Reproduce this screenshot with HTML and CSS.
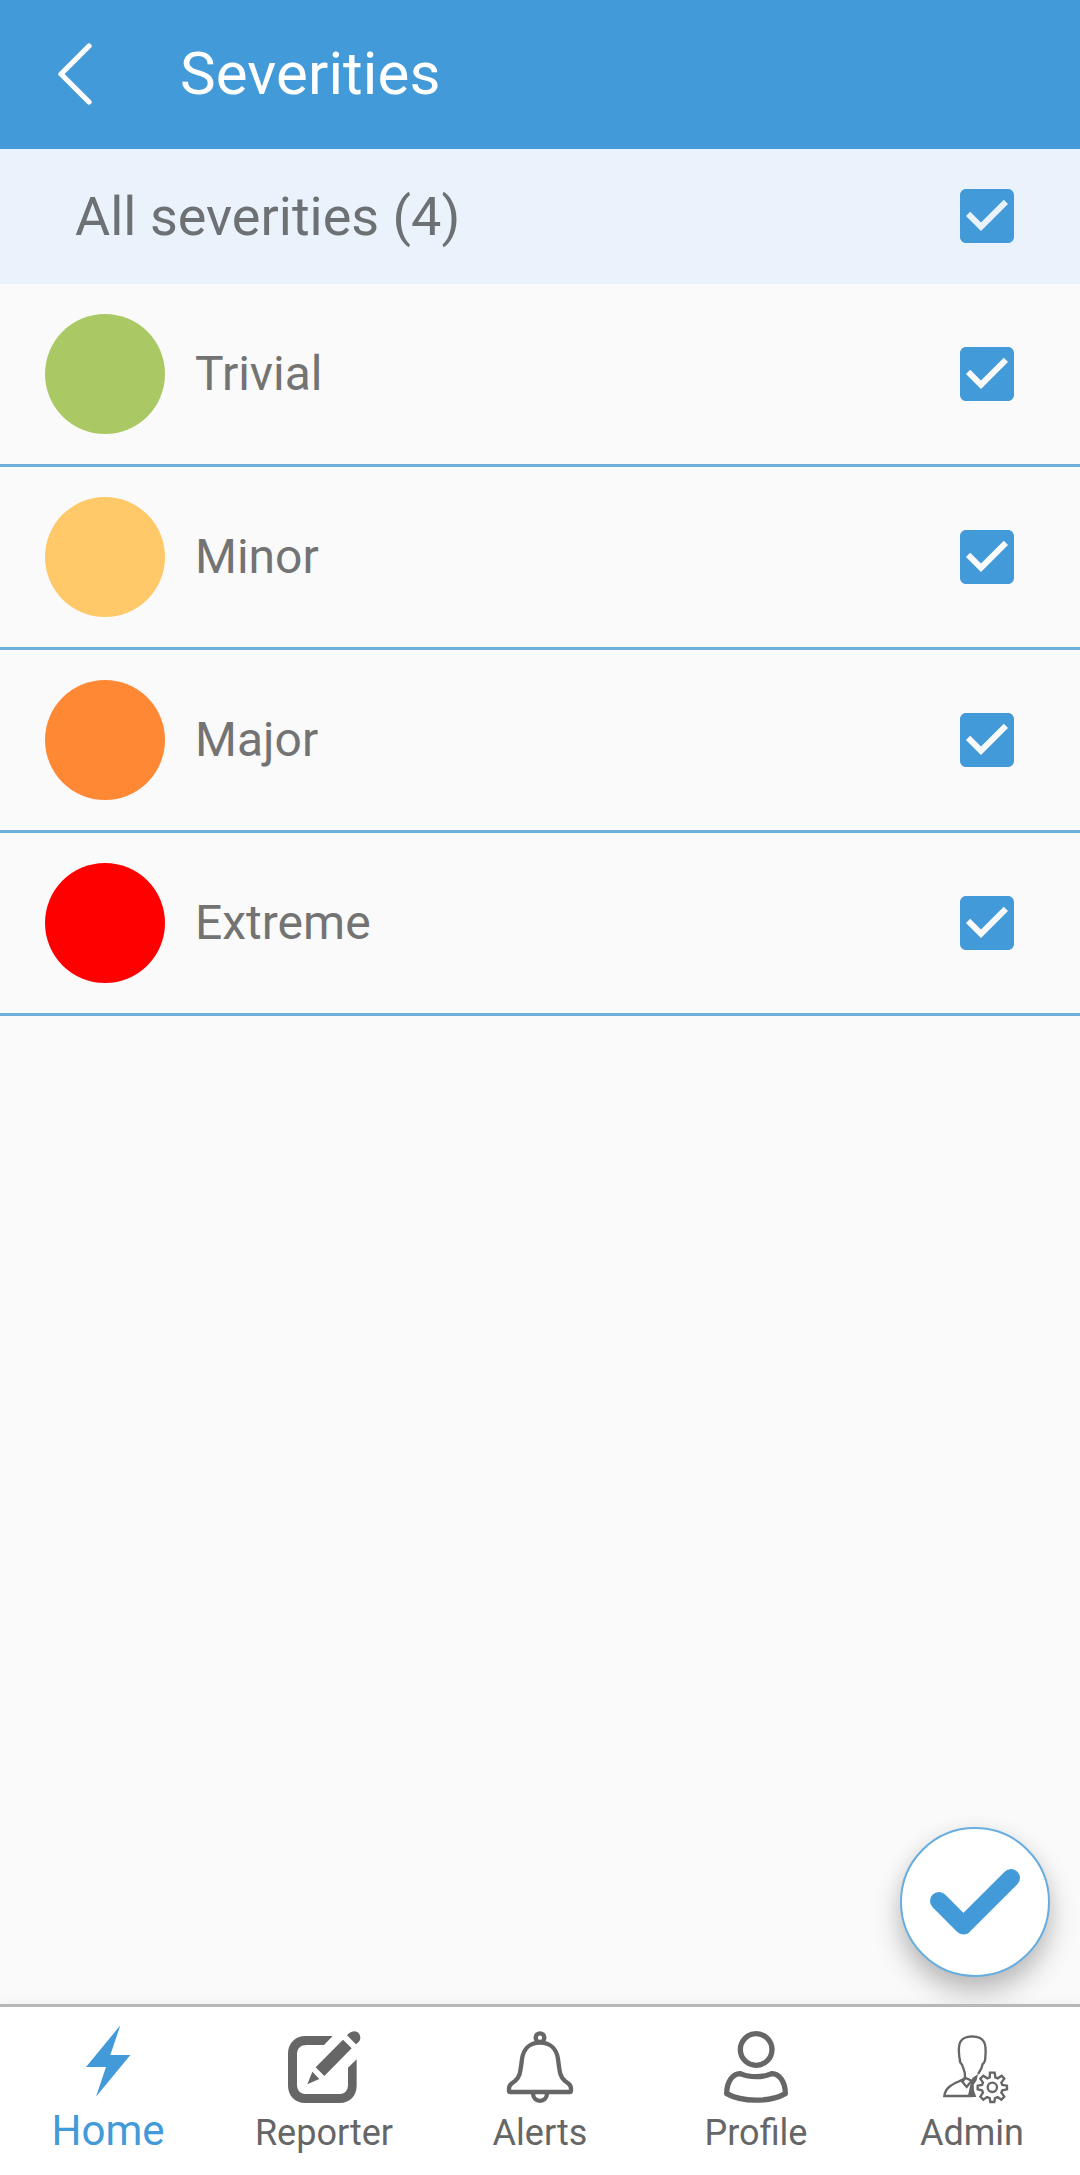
FILE: index.html
```html
<!DOCTYPE html>
<html lang="en">
<head>
<meta charset="utf-8">
<title>Severities</title>
<link rel="stylesheet" href="styles.css">
</head>
<body>
<svg class="defs" width="0" height="0" aria-hidden="true">
  <symbol id="checkbox" viewBox="0 0 24 24">
    <path d="M19 3H5c-1.1 0-2 .9-2 2v14c0 1.1.9 2 2 2h14c1.1 0 2-.9 2-2V5c0-1.1-.9-2-2-2zm-9 14l-5-5 1.41-1.41L10 14.17l7.59-7.59L19 8l-9 9z"/>
  </symbol>
</svg>
<div class="app">
  <header class="header">
    <svg class="back" viewBox="0 0 36 66"><path d="M32 5 4 33 32 61"/></svg>
    <h1 class="title">Severities</h1>
  </header>
  <main class="content">
    <div class="all-row">
      <span class="all-label">All severities (4)</span>
      <svg class="checkbox"><use href="#checkbox"/></svg>
    </div>
    <ul class="list">
      <li class="row"><span class="dot trivial"></span><span class="label">Trivial</span><svg class="checkbox"><use href="#checkbox"/></svg></li>
      <li class="row"><span class="dot minor"></span><span class="label">Minor</span><svg class="checkbox"><use href="#checkbox"/></svg></li>
      <li class="row"><span class="dot major"></span><span class="label">Major</span><svg class="checkbox"><use href="#checkbox"/></svg></li>
      <li class="row"><span class="dot extreme"></span><span class="label">Extreme</span><svg class="checkbox"><use href="#checkbox"/></svg></li>
    </ul>
    <button class="fab" aria-label="Confirm">
      <svg class="fab-icon" viewBox="0 0 150 150"><path d="M39 74 63.4 98.5 111 51"/></svg>
    </button>
  </main>
  <nav class="nav">
    <a class="tab active">
      <svg class="tab-icon" viewBox="108 96 252 252"><path class="fill" d="M271 106 241 195H301L198 320 228 231H168Z"/></svg>
      <span>Home</span>
    </a>
    <a class="tab">
      <svg class="tab-icon" viewBox="126 96 252 252">
        <path class="fill" d="M278 138H196C166 138 144 160 144 190V287C144 317 166 339 196 339H299C329 339 350 317 350 287V208L324 233V284C324 302 314 312 296 312H200C182 312 171 302 171 284V193C171 175 182 165 200 165H252Z"/>
        <path class="fill" d="M309 149 335 175 253 258 227 232ZM217 245 238 267 202 283ZM321 136C337 116 361 122 361 144C361 153 354 158 348 163Z"/>
      </svg>
      <span>Reporter</span>
    </a>
    <a class="tab">
      <svg class="tab-icon" viewBox="84 96 252 252">
        <g class="line bell">
          <circle cx="210" cy="143" r="13"/>
          <path d="M210 158C178 158 160 178 156 207C151 244 151 260 135 273C122 282 117 286 117 297V302Q117 306 122 306H298Q303 306 303 302V297C303 286 298 282 285 273C269 260 269 244 264 207C260 178 242 158 210 158Z"/>
          <path d="M189 310C189 340 231 340 231 310"/>
        </g>
      </svg>
      <span>Alerts</span>
    </a>
    <a class="tab">
      <svg class="tab-icon" viewBox="102 96 252 252">
        <g class="line person">
          <circle cx="228.500" cy="178.500" r="47.500"/>
          <path d="M180 251C158 252 140 275 140 311C186 337 270 337 316 311C316 275 298 252 276 251C268 252 263 260 228 260C193 260 188 252 180 251Z"/>
        </g>
      </svg>
      <span>Profile</span>
    </a>
    <a class="tab">
      <svg class="tab-icon" viewBox="90 96 252 252">
        <g class="line admin">
          <path d="M195 263C197 246 191 238 186 224Q179 219 179 205L178 202C173 160 179 140 216 139C254 140 260 160 256 202L255 212Q252 220 248 222C246 236 241 242 234 252"/>
          <path d="M195 263C188 276 137 279 133 318H219"/>
          <path d="M196 264 187 275 200 291 215 272Z"/>
          <path d="M270 248H284L286 262 293 265 305 257 313 266 304 278 307 285 321 287V298L307 301 304 308 313 320 304 329 293 321 285 324 283 336H271L269 324 261 321 250 329 241 320 249 308 246 301 233 298V287L246 285 249 278 241 266 250 257 262 265 269 262Z"/>
          <circle cx="277" cy="292" r="14"/>
        </g>
        <path class="fill" d="M217 264 234 252 230 271 221 284 222 302 229 321H203L210 289Z"/>
      </svg>
      <span>Admin</span>
    </a>
  </nav>
</div>
</body>
</html>
```
FILE: styles.css
```css
* { box-sizing: border-box; }

body {
  margin: 0;
  background: #fafafa;
  font-family: Roboto, "Liberation Sans", sans-serif;
  color: #737373;
}

.defs { position: absolute; }

.app {
  display: flex;
  flex-direction: column;
  width: 1080px;
  height: 2175px;
}

.header {
  display: flex;
  align-items: center;
  height: 149px;
  padding-left: 57px;
  background: #429ad9;
  color: #fff;
}

.back {
  width: 36px;
  height: 66px;
  margin-top: -1px;
  fill: none;
  stroke: #fff;
  stroke-width: 5.3;
  stroke-linecap: round;
  stroke-linejoin: round;
}

.title {
  margin: -2px 0 0 87px;
  font-size: 60px;
  font-weight: 400;
  line-height: 70px;
  letter-spacing: .1px;
}

.content {
  position: relative;
  flex: 1;
}

.all-row {
  display: flex;
  align-items: center;
  justify-content: space-between;
  height: 135px;
  padding: 0 57px 1px 75px;
  background: #eaf3fb;
}

.all-label {
  color: #6d7173;
  font-size: 54px;
}

.checkbox {
  width: 72px;
  height: 72px;
  fill: #429ad9;
}

.list {
  margin: 0;
  padding: 0;
  list-style: none;
}

.row {
  display: flex;
  align-items: center;
  height: 183px;
  padding: 0 57px 0 45px;
  border-bottom: 3px solid #6eafdc;
}

.dot {
  width: 120px;
  height: 120px;
  border-radius: 50%;
}

.trivial { background: #aac965; }
.minor { background: #ffc868; }
.major { background: #ff8834; }
.extreme { background: #f00; }

.label {
  flex: 1;
  margin-left: 30px;
  padding-bottom: 2px;
  font-size: 48px;
}

/* Floats over the list, above the tab bar */
.fab {
  position: absolute;
  right: 30px;
  bottom: 27px;
  width: 150px;
  height: 150px;
  padding: 0;
  border: 2px solid #68addf;
  border-radius: 50%;
  background: #fff;
  box-shadow: 0 16px 28px rgba(0, 0, 0, .24), 0 2px 20px rgba(0, 0, 0, .06);
}

.fab-icon {
  display: block;
  width: 150px;
  height: 150px;
  margin: -2px;
  fill: none;
  stroke: #429ad9;
  stroke-width: 18;
  stroke-linecap: round;
  stroke-linejoin: round;
}

.nav {
  position: relative;
  display: flex;
  height: 171px;
  border-top: 3px solid #b7b7b7;
  background: #fff;
  box-shadow: 0 0 12px rgba(0, 0, 0, .05);
}

.tab {
  display: flex;
  flex: 1;
  flex-direction: column;
  align-items: center;
  padding-top: 15px;
  color: #666;
  font-size: 36px;
  line-height: 50px;
}

.tab span { margin-top: 2px; }

.active {
  color: #429ad9;
  font-size: 42px;
}

.active span { margin-top: 0; }

.tab-icon {
  width: 84px;
  height: 84px;
}

.fill { fill: currentColor; }

.line {
  fill: none;
  stroke: currentColor;
  stroke-linejoin: round;
}

.bell { stroke-width: 13; }
.person { stroke-width: 16; }
.admin { stroke-width: 7; stroke-linejoin: miter; }
```
